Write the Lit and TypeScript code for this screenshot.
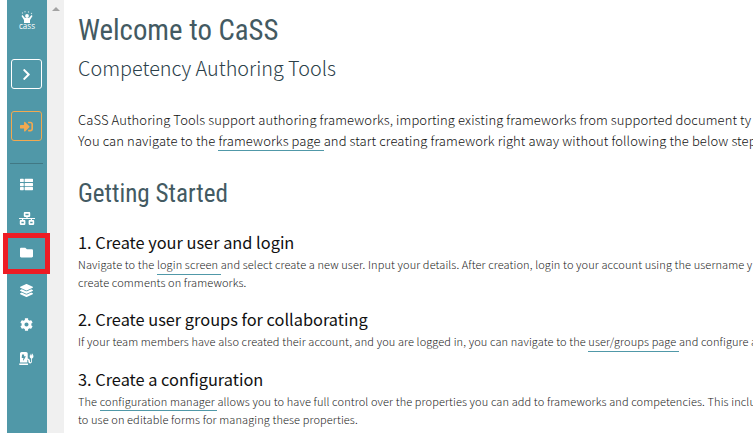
import { LitElement, html, css, svg } from "lit";
import { customElement } from "lit/decorators.js";

const ICONS = {
  chevron: { box: "0 0 320 512", d: "M285.476 272.971L91.132 467.314c-9.373 9.373-24.569 9.373-33.941 0l-22.667-22.667c-9.357-9.357-9.375-24.522-.04-33.901L188.505 256 34.484 101.255c-9.335-9.379-9.317-24.544.04-33.901l22.667-22.667c9.373-9.373 24.569-9.373 33.941 0L285.475 239.03c9.373 9.372 9.373 24.568.001 33.941z" },
  signIn: { box: "0 0 512 512", d: "M416 448h-84c-6.6 0-12-5.4-12-12v-40c0-6.6 5.4-12 12-12h84c17.7 0 32-14.3 32-32V160c0-17.7-14.3-32-32-32h-84c-6.6 0-12-5.4-12-12V76c0-6.6 5.4-12 12-12h84c53 0 96 43 96 96v192c0 53-43 96-96 96zm-47-201L201 79c-15-15-41-4.5-41 17v96H24c-13.3 0-24 10.7-24 24v96c0 13.3 10.7 24 24 24h136v96c0 21.5 26 32 41 17l168-168c9.3-9.4 9.3-24.6 0-34z" },
  list: { box: "0 0 512 512", d: "M24 32h101a24 24 0 0 1 24 24v80a24 24 0 0 1-24 24H24a24 24 0 0 1-24-24V56a24 24 0 0 1 24-24zM24 192h101a24 24 0 0 1 24 24v80a24 24 0 0 1-24 24H24a24 24 0 0 1-24-24v-80a24 24 0 0 1 24-24zM24 352h101a24 24 0 0 1 24 24v80a24 24 0 0 1-24 24H24a24 24 0 0 1-24-24v-80a24 24 0 0 1 24-24zM205 32h283a24 24 0 0 1 24 24v80a24 24 0 0 1-24 24H205a24 24 0 0 1-24-24V56a24 24 0 0 1 24-24zM205 192h283a24 24 0 0 1 24 24v80a24 24 0 0 1-24 24H205a24 24 0 0 1-24-24v-80a24 24 0 0 1 24-24zM205 352h283a24 24 0 0 1 24 24v80a24 24 0 0 1-24 24H205a24 24 0 0 1-24-24v-80a24 24 0 0 1 24-24z" },
  network: { box: "0 0 640 512", d: "M640 264v-16c0-8.84-7.16-16-16-16H344v-40h72c17.67 0 32-14.33 32-32V32c0-17.67-14.33-32-32-32H224c-17.67 0-32 14.33-32 32v128c0 17.67 14.33 32 32 32h72v40H16c-8.84 0-16 7.16-16 16v16c0 8.84 7.16 16 16 16h104v40H64c-17.67 0-32 14.33-32 32v128c0 17.67 14.33 32 32 32h160c17.67 0 32-14.33 32-32V352c0-17.67-14.33-32-32-32h-56v-40h304v40h-56c-17.67 0-32 14.33-32 32v128c0 17.67 14.33 32 32 32h160c17.67 0 32-14.33 32-32V352c0-17.67-14.33-32-32-32h-56v-40h104c8.84 0 16-7.16 16-16zM256 128V64h128v64H256zm-64 320H96v-64h96v64zm352 0h-96v-64h96v64z" },
  folder: { box: "0 0 512 512", d: "M464 128H272l-64-64H48C21.49 64 0 85.49 0 112v288c0 26.51 21.49 48 48 48h416c26.51 0 48-21.49 48-48V176c0-26.51-21.49-48-48-48z" },
  layers: { box: "0 0 512 512", d: "M12.41 148.02l232.94 105.67c6.8 3.09 14.49 3.09 21.29 0l232.94-105.67c16.55-7.51 16.55-32.52 0-40.03L266.65 2.31a25.607 25.607 0 0 0-21.29 0L12.41 107.98c-16.55 7.51-16.55 32.53 0 40.04zm487.18 88.28l-58.09-26.33-161.64 73.27c-7.56 3.43-15.59 5.17-23.86 5.17s-16.29-1.74-23.86-5.17L70.51 209.97l-58.1 26.33c-16.55 7.5-16.55 32.5 0 40l232.94 105.59c6.8 3.08 14.49 3.08 21.29 0L499.59 276.3c16.55-7.5 16.55-32.5 0-40zm0 127.8l-57.87-26.23-161.86 73.37c-7.56 3.43-15.59 5.17-23.86 5.17s-16.29-1.74-23.86-5.17L70.29 337.87 12.41 364.1c-16.55 7.5-16.55 32.5 0 40l232.94 105.59c6.8 3.08 14.49 3.08 21.29 0L499.59 404.1c16.55-7.5 16.55-32.5 0-40z" },
  cog: { box: "0 0 512 512", d: "M487.4 315.7l-42.6-24.6c4.3-23.2 4.3-47 0-70.2l42.6-24.6c4.9-2.8 7.1-8.6 5.5-14-11.1-35.6-30-67.8-54.7-94.6-3.8-4.1-10-5.1-14.8-2.3L380.8 110c-17.9-15.4-38.5-27.3-60.8-35.1V25.8c0-5.6-3.9-10.5-9.4-11.7-36.7-8.2-74.3-7.8-109.2 0-5.5 1.2-9.4 6.1-9.4 11.7V75c-22.2 7.9-42.8 19.8-60.8 35.1L88.7 85.5c-4.9-2.8-11-1.9-14.8 2.3-24.7 26.7-43.6 58.9-54.7 94.6-1.7 5.4.6 11.2 5.5 14L67.3 221c-4.3 23.2-4.3 47 0 70.2l-42.6 24.6c-4.9 2.8-7.1 8.6-5.5 14 11.1 35.6 30 67.8 54.7 94.6 3.8 4.1 10 5.1 14.8 2.3l42.6-24.6c17.9 15.4 38.5 27.3 60.8 35.1v49.2c0 5.6 3.9 10.5 9.4 11.7 36.7 8.2 74.3 7.8 109.2 0 5.5-1.2 9.4-6.1 9.4-11.7v-49.2c22.2-7.9 42.8-19.8 60.8-35.1l42.6 24.6c4.9 2.8 11 1.9 14.8-2.3 24.7-26.7 43.6-58.9 54.7-94.6 1.5-5.5-.7-11.3-5.6-14.1zM256 336c-44.1 0-80-35.9-80-80s35.9-80 80-80 80 35.9 80 80-35.9 80-80 80z" },
  station: { box: "0 0 576 512", d: "M336 448H16c-8.84 0-16 7.16-16 16v32c0 8.84 7.16 16 16 16h320c8.84 0 16-7.16 16-16v-32c0-8.84-7.16-16-16-16zM544 128V80c0-8.84-7.16-16-16-16s-16 7.16-16 16v48h-32V80c0-8.84-7.16-16-16-16s-16 7.16-16 16v48h-16c-8.84 0-16 7.16-16 16v35.76c0 36 24 69 56 79V376c0 13.2-10.8 24-24 24s-24-10.8-24-24v-28c0-50-39-92-88-92V64c0-35.35-28.65-64-64-64H96C60.65 0 32 28.65 32 64v352h288V304c24 0 40 20 40 44v28c0 40 32 72 72 72s72-32 72-72V258c32-10 56-43 56-79V144c0-8.84-7.16-16-16-16zM260 180l-90 150c-8 12-24 4-21-8l20-82h-55c-9 0-15-8-14-16l12-112c1-7 7-12 14-12h60c9 0 16 9 13 18l-16 50h64c11 0 18 8 13 12z" },
};

type IconName = keyof typeof ICONS;

@customElement("side-icon")
class SideIcon extends LitElement {
  static properties = { name: { type: String } };
  declare name: IconName;

  static styles = css`
    :host { display: block; }
    .glyph { display: block; width: 100%; height: 100%; fill: currentColor; }
  `;

  render() {
    const icon = ICONS[this.name];
    return html`<svg class="glyph" viewBox=${icon.box}>${svg`<path fill-rule="evenodd" d=${icon.d}></path>`}</svg>`;
  }
}

@customElement("app-root")
class AppRoot extends LitElement {
  static styles = css`
    :host {
      display: flex;
      position: relative;
      width: 753px;
      height: 433px;
      overflow: hidden;
      box-sizing: border-box;
      padding-left: 7px;
      background: #fff;
      font-family: "Noto Sans CJK SC", "Open Sans", sans-serif;
      font-weight: 300;
      color: #111;
    }
    .sidebar {
      flex: none;
      box-sizing: border-box;
      width: 40px;
      height: 433px;
      padding-right: 1px;
      display: flex;
      flex-direction: column;
      align-items: center;
      background: #5098a8;
      color: #fff;
    }
    .logo { display: block; width: 20px; height: 22px; margin-top: 9px; }
    .btn {
      box-sizing: border-box;
      width: 31px;
      height: 30px;
      border: 1px solid currentColor;
      border-radius: 3px;
      display: flex;
      align-items: center;
      justify-content: center;
    }
    .btn.expand { margin-top: 28px; }
    .btn.login { margin-top: 22px; color: #f2a950; }
    .btn .chev { width: 9px; height: 13px; }
    .btn .sign { width: 13px; height: 13px; }
    .divider { width: 33px; height: 1px; margin-top: 22px; background: #417884; }
    .nav {
      display: grid;
      grid-template-rows: 34px 34px 38px 34px 34px 34px;
      justify-items: center;
      align-items: center;
      margin-top: 3px;
    }
    .nav side-icon { width: 13px; height: 13px; }
    .nav .wide { width: 16px; }
    .nav .station { width: 15px; height: 13px; }
    .nav .fold { margin-bottom: 4px; }
    .mark {
      position: absolute;
      left: 3px;
      top: 233px;
      width: 47px;
      height: 41px;
      box-sizing: border-box;
      border: 5px solid #ed1c24;
    }
    .scroll {
      flex: none;
      width: 17px;
      height: 433px;
      background: #f0f0f0;
      display: flex;
      justify-content: center;
    }
    .up {
      width: 0;
      height: 0;
      margin-top: 7px;
      border: 4px solid transparent;
      border-top: 0;
      border-bottom: 4px solid #a3a3a3;
      align-self: flex-start;
    }
    .content { flex: 1; min-width: 0; padding-left: 14px; overflow: hidden; white-space: nowrap; }
    h1, h2, h3, p { margin: 0; font-weight: inherit; }
    h1, h2.section {
      font-family: Roboto, "Liberation Sans", sans-serif;
      font-weight: 400;
      font-stretch: 75%;
      color: #435a62;
    }
    h1 { font-size: 28.8px; line-height: 36px; margin-top: 12px; }
    h2.sub { font-size: 19.8px; font-weight: 300; line-height: 28px; margin-top: 6px; color: #2b4049; }
    .intro { font-size: 13px; line-height: 21px; margin-top: 27px; letter-spacing: 0.1px; }
    h2.section { font-size: 25.1px; line-height: 30px; margin-top: 28px; }
    h3 { font-size: 16.35px; line-height: 22px; font-weight: 400; color: #111; }
    .one { margin-top: 22px; }
    .two { margin-top: 17px; }
    .three { margin-top: 20px; }
    .small { font-size: 11px; line-height: 18px; margin-top: 2px; letter-spacing: 0.112px; color: #1c1c1c; }
    .two + .small { margin-bottom: -2px; }
    .link { display: inline-block; box-sizing: border-box; height: 20px; margin-bottom: -2px; border-bottom: 1px solid #5098a8; vertical-align: top; }
    .three + .small .link { height: 19px; margin-bottom: -1px; }
    .intro .link { height: 21px; line-height: 21px; margin-bottom: 0; }
    .pad { white-space: pre; }
  `;

  render() {
    return html`
      <nav class="sidebar">
        <svg class="logo" viewBox="0 0 20 22" fill="#fff">
          <circle cx="10" cy="7" r="1.900"></circle>
          <path d="M5.500 6l2.500 3h4l2.500-3 1 1-2.500 4v3H7v-3L4.500 7z"></path>
          <g opacity=".7"><circle cx="5.500" cy="4" r=".7"></circle><circle cx="8" cy="2.700" r=".7"></circle><circle cx="11.500" cy="3" r=".7"></circle><circle cx="14.500" cy="4.500" r=".7"></circle></g>
          <text x="2" y="19.800" font-family="Open Sans" font-size="9" font-weight="400" textLength="16" lengthAdjust="spacingAndGlyphs">cass</text>
        </svg>
        <div class="btn expand"><side-icon class="chev" name="chevron"></side-icon></div>
        <div class="btn login"><side-icon class="sign" name="signIn"></side-icon></div>
        <div class="divider"></div>
        <div class="nav">
          <side-icon name="list"></side-icon>
          <side-icon class="wide" name="network"></side-icon>
          <side-icon class="fold" name="folder"></side-icon>
          <side-icon name="layers"></side-icon>
          <side-icon name="cog"></side-icon>
          <side-icon class="station" name="station"></side-icon>
        </div>
      </nav>
      <div class="scroll"><div class="up"></div></div>
      <main class="content">
        <h1>Welcome to CaSS</h1>
        <h2 class="sub">Competency Authoring Tools</h2>
        <p class="intro">
          CaSS Authoring Tools support authoring frameworks, importing existing frameworks from supported document ty<br />You can navigate to the <span class="link pad">frameworks page </span>and start creating framework right away without following the below step
        </p>
        <h2 class="section">Getting Started</h2>
        <h3 class="one">1. Create your user and login</h3>
        <p class="small">
          Navigate to the <span class="link pad">login screen </span>and select create a new user. Input your details. After creation, login to your account using the username y<br />create comments on frameworks.
        </p>
        <h3 class="two">2. Create user groups for collaborating</h3>
        <p class="small">
          If your team members have also created their account, and you are logged in, you can navigate to the <span class="link pad">user/groups page </span>and configure a
        </p>
        <h3 class="three">3. Create a configuration</h3>
        <p class="small">
          The <span class="link pad">configuration manager </span>allows you to have full control over the properties you can add to frameworks and competencies. This inclu<br />to use on editable forms for managing these properties.
        </p>
      </main>
      <div class="mark"></div>
    `;
  }
}
